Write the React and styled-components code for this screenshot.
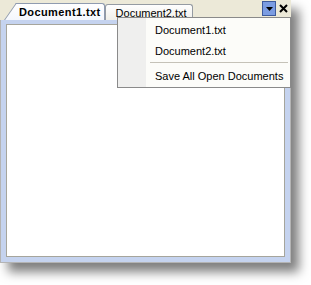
import styled, { createGlobalStyle } from "styled-components";

const GlobalStyle = createGlobalStyle`
    html, body {
        margin: 0;
        padding: 0;
        background: #ffffff;
    }
    body {
        font-family: "Liberation Sans", Arial, sans-serif;
        font-size: 11px;
        color: #000000;
    }
`;

const Page = styled.div`
    width: 311px;
    height: 285px;
    overflow: hidden;
`;

const Control = styled.div`
    position: relative;
    width: 291px;
    height: 263px;
    display: flex;
    flex-direction: column;
    box-shadow: 8px 9px 10px rgba(0, 0, 0, 0.5);
`;

const TabStrip = styled.div`
    height: 20px;
    display: flex;
    align-items: flex-end;
    background: #ece9d8;
    position: relative;
`;

const ActiveTab = styled.div`
    position: relative;
    z-index: 2;
    height: 16px;
    margin-left: 17px;
    padding: 0 3px 0 2px;
    display: flex;
    align-items: center;
    font-weight: bold;
    letter-spacing: 0.4px;
    background: linear-gradient(#ffffff, #f4f7fd);
    border-top: 1px solid #8f9bb0;
    border-right: 1px solid #8f9bb0;
    border-top-right-radius: 3px;

    &::before {
        content: "";
        position: absolute;
        top: -1px;
        bottom: 0;
        left: -7px;
        width: 14px;
        transform: skewX(-35deg);
        transform-origin: center;
        background: linear-gradient(#ffffff, #f4f7fd);
        border-left: 1px solid #8f9bb0;
        border-top: 1px solid #8f9bb0;
        z-index: -1;
    }
`;

const Tab = styled.div`
    height: 15px;
    padding: 0 5px 0 10px;
    display: flex;
    align-items: center;
    background: linear-gradient(#fefefe, #f0efe9);
    border: 1px solid #959ba2;
    border-bottom: none;
    border-radius: 3px 3px 0 0;
`;

const StripButtons = styled.div`
    margin-left: auto;
    align-self: flex-start;
    display: flex;
    align-items: center;
    gap: 2px;
    padding: 1px 2px 0 0;
`;

const DropButton = styled.div`
    width: 12px;
    height: 13px;
    display: flex;
    align-items: center;
    justify-content: center;
    background: #7b9ce2;
    border: 1px solid #3d5a9c;
`;

const CloseButton = styled.div`
    width: 11px;
    height: 13px;
    display: flex;
    align-items: center;
    justify-content: center;
`;

const Frame = styled.div`
    flex: 1;
    display: flex;
    padding: 4px 5px 5px 5px;
    background: #c5d3ef;
    border: 1px solid #b4b4b4;
    border-top: none;
`;

const Content = styled.div`
    flex: 1;
    background: #ffffff;
    border: 1px solid #a6a59c;
`;

const Menu = styled.div`
    position: absolute;
    z-index: 5;
    left: 117px;
    top: 17px;
    width: 172px;
    padding: 1px 0;
    display: flex;
    flex-direction: column;
    background: linear-gradient(to right, #efefee 0, #efefee 28px, #fcfcf9 28px);
    border: 1px solid #8a8a8a;
`;

const MenuItem = styled.div`
    height: 21px;
    display: flex;
    align-items: center;
    padding-left: 37px;
    white-space: nowrap;
`;

const Separator = styled.div`
    height: 1px;
    margin: 1px 2px 2px 32px;
    background: #c5c2b8;
`;

const App = () => {
    return (
        <>
            <GlobalStyle />
            <Page>
                <Control>
                    <TabStrip>
                        <ActiveTab>{'Document1.txt'}</ActiveTab>
                        <Tab>{'Document2.txt'}</Tab>
                        <StripButtons>
                            <DropButton>
                                <svg width="7" height="4" viewBox="0 0 7 4">
                                    <polygon points="0,0 7,0 3.5,4" fill="#000" />
                                </svg>
                            </DropButton>
                            <CloseButton>
                                <svg width="9" height="9" viewBox="0 0 9 9">
                                    <path d="M1 1 L8 8 M8 1 L1 8" stroke="#000" strokeWidth="2" />
                                </svg>
                            </CloseButton>
                        </StripButtons>
                    </TabStrip>
                    <Frame>
                        <Content />
                    </Frame>
                    <Menu>
                        <MenuItem>{'Document1.txt'}</MenuItem>
                        <MenuItem>{'Document2.txt'}</MenuItem>
                        <Separator />
                        <MenuItem>{'Save All Open Documents'}</MenuItem>
                    </Menu>
                </Control>
            </Page>
        </>
    );
};

export default App;
